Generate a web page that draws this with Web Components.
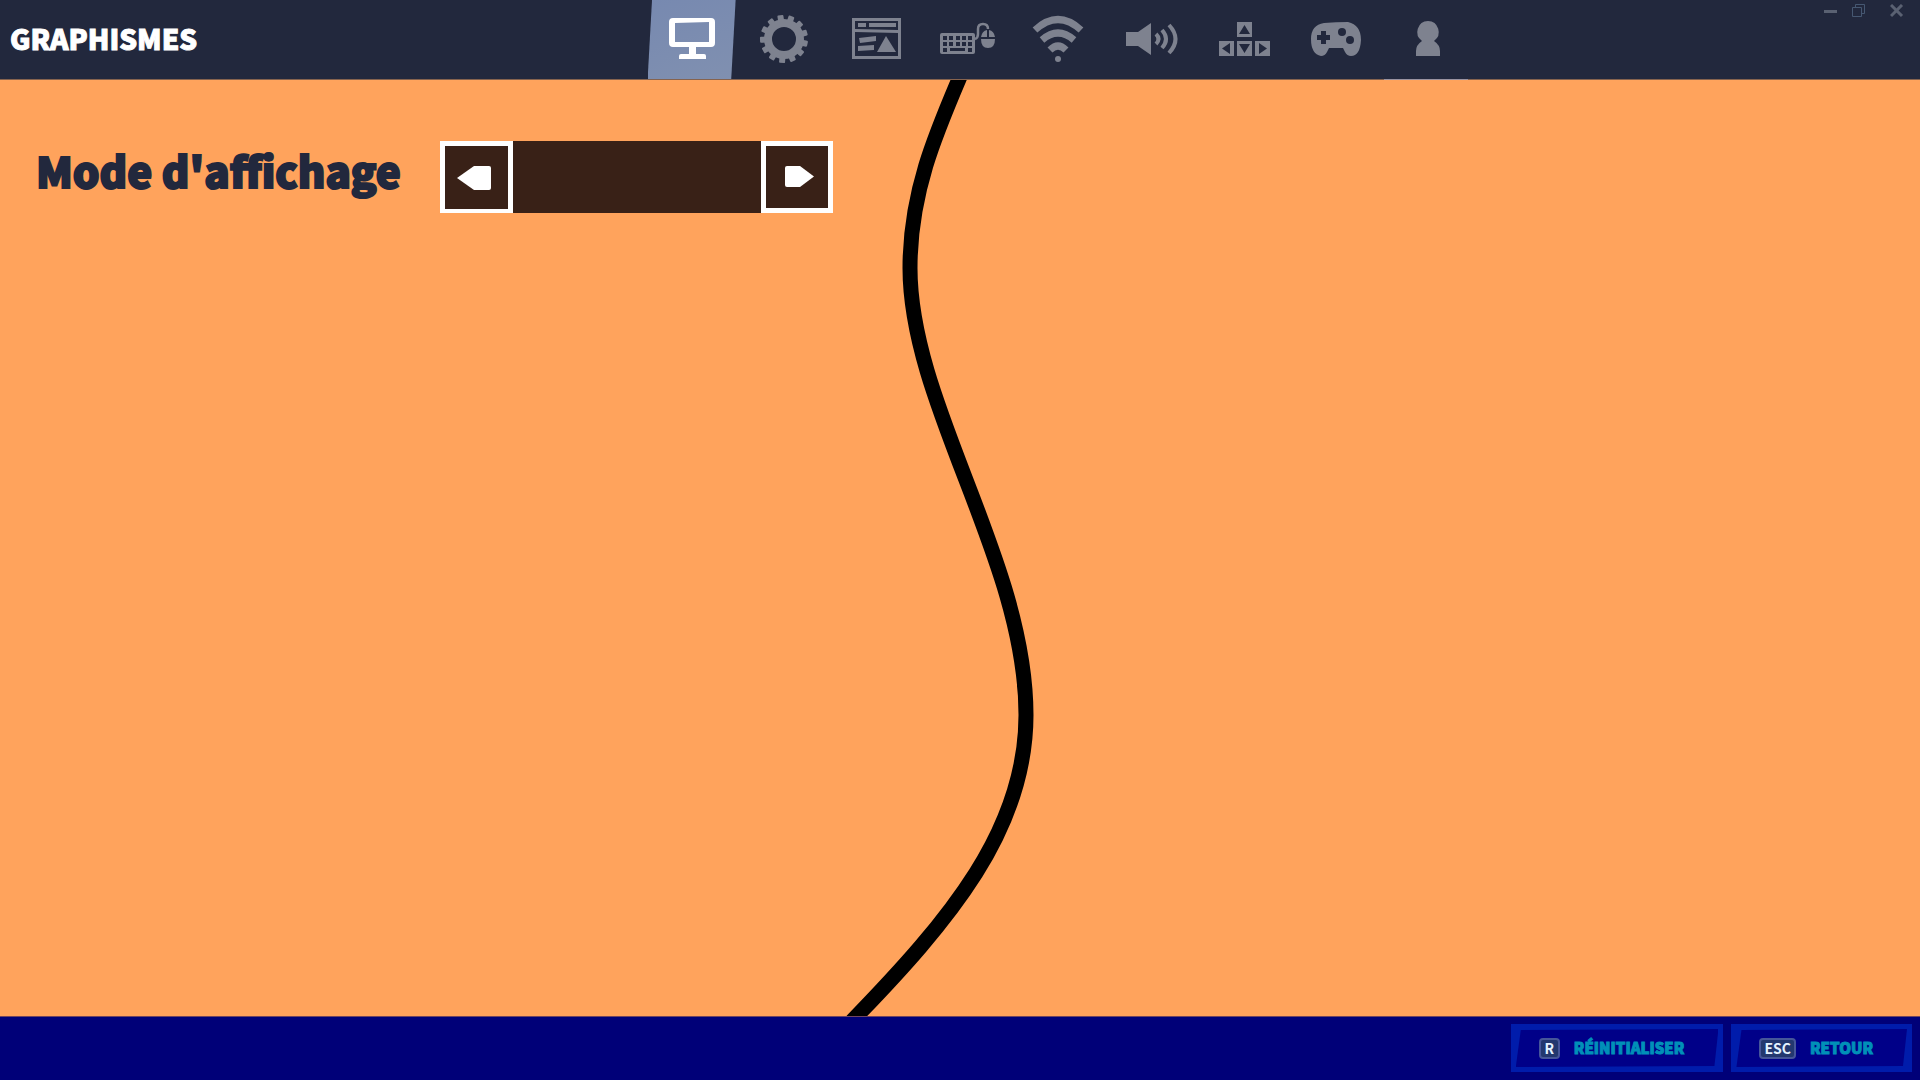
<!DOCTYPE html>
<html lang="fr">
<head>
<meta charset="utf-8">
<title>Graphismes</title>
<style>
html,body{margin:0;height:100%}
body{font-family:"Noto Sans CJK SC","Open Sans",sans-serif;background:#ffa35c}
</style>
</head>
<body>
<settings-screen></settings-screen>
<script>
const define = (name, html, setup) => customElements.define(name, class extends HTMLElement {
  connectedCallback() {
    if (this.shadowRoot) return;
    this.attachShadow({mode: 'open'}).innerHTML = html;
    if (setup) setup(this, this.shadowRoot);
  }
});

const icons = {
  display: '<path fill="#fff" fill-rule="evenodd" d="M4 0H42Q46 0 46 4V25Q46 29 42 29H27V36H35Q37 36 37 38V41H10V38Q10 36 12 36H20V29H4Q0 29 0 25V4Q0 0 4 0ZM6 5V24H40V4Z"/>',
  gear: '',
  hud: '<path fill="currentColor" fill-rule="evenodd" d="M0 0H49V41H0ZM3 3V11L46 12V3ZM3 14V38H46V15Z"/><path fill="currentColor" d="M6 5H14V9H6ZM17 5H44V9H17ZM7 20L24 18V23L8 25ZM6 28L22 27V32L6 33ZM34 18L44 34H25Z"/>',
  keyboard: '<rect y="10" width="35" height="21" rx="2" fill="currentColor"/><g fill="#22283d"><path d="M3 13h4v4H3zM9 13h4v4H9zM16 13h4v4h-4zM22 13h4v4h-4zM28 13h4v4h-4zM3 19h4v4H3zM9 19h4v4H9zM16 19h4v4h-4zM22 19h4v4h-4zM28 19h4v4h-4zM3 25h4v4H3zM10 25h15v3H10zM28 25h4v4h-4z"/></g><path d="M35 16Q38 15 38 11V6Q38 1 43 1Q48 1 48 6" fill="none" stroke="currentColor" stroke-width="2.5"/><path fill="currentColor" d="M47 7V14H41Q42 8 47 7ZM49 7Q54 8 55 14H49ZM41 16H55Q55 25 48 25Q41 25 41 16Z"/>',
  wifi: '<g fill="none" stroke="currentColor" stroke-width="7"><path d="M2 14Q25 -7 48 14"/><path d="M9 24Q25 10 41 24"/><path d="M17 34Q25 26 33 34"/></g><circle cx="25" cy="43" r="3" fill="currentColor"/>',
  sound: '<path fill="currentColor" d="M0 9H12L25 0V32L12 23H0Z"/><g fill="none" stroke="currentColor" stroke-width="4"><path d="M30 11Q35 16 30 21"/><path d="M36 7Q44 16 36 25"/><path d="M43 2Q56 16 43 30"/></g>',
  keys: '<path fill="currentColor" fill-rule="evenodd" d="M18 0H33V15H18ZM25.500 3L20 12H31ZM0 19H15V34H0ZM3 26.500L11 32V21ZM18 19H33V34H18ZM20 22L25.500 31L31 22ZM36 19H51V34H36ZM40 21V32L48 26.500Z"/>',
  pad: '<path fill="currentColor" d="M13 1Q25 0 37 0Q50 3 50 18Q49 34 40 34Q36 34 34 30L32 26H18L16 30Q14 34 10 34Q0 32 0 17Q0 3 13 1Z"/><g fill="#22283d"><path d="M10 9h5v4h4v5h-4v4h-5v-4H6v-5h4z"/><circle cx="31" cy="10" r="4"/><circle cx="39" cy="18" r="4"/></g>',
  person: '<path fill="currentColor" d="M12 0A11 11 0 0 1 18 20Q24 24 24 30V35H0V30Q0 24 6 20A11 11 0 0 1 12 0Z"/>'
};
let teeth = '';
for (let i = 0; i < 13; i++) teeth += `<rect x="21" y="0" width="6" height="9" rx="1" transform="rotate(${-9 + i * 360 / 13} 24 24)"/>`;
icons.gear = `<g fill="currentColor">${teeth}<path fill-rule="evenodd" d="M24 4A20 20 0 1 0 24 44A20 20 0 1 0 24 4ZM24 12A12 12 0 1 1 24 36A12 12 0 1 1 24 12Z"/></g>`;

/* One category tab: <nav-tab icon w h label> */
define('nav-tab', `<style>
:host{display:block;width:88px;height:79px}
button{width:100%;height:100%;padding:0;border:0;background:none;color:#7e828f;display:flex;align-items:center;justify-content:center}
:host([active]) button{background:linear-gradient(160deg,#7789b0,#8090b0);clip-path:polygon(5% 0,100% 0,95% 100%,0 100%)}
:host([last]){width:84px;height:80px;padding-right:4px}
:host([last]) button{border-bottom:1px solid #9a93a0;padding-left:4px}
svg{display:block;overflow:visible;margin-top:-2px}
</style><button type="button"></button>`, (el, root) => {
  const b = root.querySelector('button'), w = el.getAttribute('w'), h = el.getAttribute('h');
  b.setAttribute('aria-label', el.getAttribute('label'));
  b.innerHTML = `<svg width="${w}" height="${h}" viewBox="0 0 ${w} ${h}">${icons[el.getAttribute('icon')]}</svg>`;
});

define('window-controls', `<style>
:host{display:flex;gap:14px;color:#5a6172}
button{display:block;width:14px;height:14px;padding:0;border:0;background:none;color:inherit}
button:last-child{margin-left:10px}
svg{display:block}
</style>
<button aria-label="Réduire"><svg width="14" height="14"><path d="M0 6h13v3H0z" fill="currentColor"/></svg></button>
<button aria-label="Agrandir"><svg width="14" height="14"><path d="M.5 3.500h9v9h-9zM3.500 3V.5h9v9H10" fill="none" stroke="#465872"/></svg></button>
<button aria-label="Fermer"><svg width="14" height="14"><path d="M1 1L12 12M12 1L1 12" stroke="currentColor" stroke-width="3"/></svg></button>`);

define('top-bar', `<style>
:host{display:grid;grid-template-columns:13fr auto 9fr;height:79px;background:#22283d;border-bottom:1px solid #86634e;box-sizing:content-box}
h1{margin:0;padding:0 0 5px 10px;align-self:center;font:900 28px/40px "Noto Sans CJK SC",sans-serif;color:#fff;-webkit-text-stroke:1px #fff}
nav{display:flex;gap:4px}
window-controls{justify-self:end;padding:4px 16px 0 0}
</style>
<h1><slot></slot></h1>
<nav>
<nav-tab active icon="display" w="46" h="41" label="Affichage"></nav-tab>
<nav-tab icon="gear" w="48" h="48" label="Jeu"></nav-tab>
<nav-tab icon="hud" w="48" h="41" label="Interface"></nav-tab>
<nav-tab icon="keyboard" w="56" h="31" label="Clavier et souris"></nav-tab>
<nav-tab icon="wifi" w="54" h="46" label="Réseau"></nav-tab>
<nav-tab icon="sound" w="52" h="32" label="Audio"></nav-tab>
<nav-tab icon="keys" w="50" h="34" label="Touches"></nav-tab>
<nav-tab icon="pad" w="50" h="34" label="Manette"></nav-tab>
<nav-tab last icon="person" w="24" h="35" label="Compte"></nav-tab>
</nav>
<window-controls></window-controls>`);

define('option-stepper', `<style>
:host{display:flex;align-items:flex-start;gap:39px}
span{font:900 42px/58px "Noto Sans CJK SC",sans-serif;color:#22283d;-webkit-text-stroke:2px #22283d}
div{display:flex;width:393px;height:72px;background:#392117}
output{flex:1}
button{box-sizing:border-box;width:73px;height:72px;padding:1px 5px 0 0;border:5px solid #fff;border-bottom-width:4px;background:#392117;display:flex;align-items:center;justify-content:center}
button:last-child{width:72px;padding:0 0 2px 5px;border-bottom-width:5px}
svg{display:block}
</style>
<span id="name"><slot></slot></span>
<div role="group" aria-labelledby="name">
<button type="button" aria-label="Précédent"><svg width="34" height="24"><path fill="#fff" d="M0 12L17 0H32Q34 0 34 2V22Q34 24 32 24H17Z"/></svg></button>
<output></output>
<button type="button" aria-label="Suivant"><svg width="29" height="21"><path fill="#fff" d="M29 10.500L15 21H2Q0 21 0 19V2Q0 0 2 0H15Z"/></svg></button>
</div>`);

define('wave-divider', `<style>
:host,svg{display:block;width:100%;height:100%}
</style><svg viewBox="0 80 1920 936" preserveAspectRatio="none" aria-hidden="true"><path d="M962 72C935 135 910 193 910 268C910 406 1026 560 1026 715C1026 830 950 920 852 1021" fill="none" stroke="#000" stroke-width="15"/></svg>`);

define('key-button', `<style>
:host{display:block}
button{display:flex;align-items:center;gap:14px;height:48px;padding:0 39px 0 28px;border:0;position:relative;background:#001cab;isolation:isolate;font:900 15px/24px "Noto Sans CJK SC",sans-serif;color:#0090b8;-webkit-text-stroke:1px #0090b8}
button::before{content:"";position:absolute;z-index:-1;inset:5px;background:#000088;clip-path:polygon(5px 1px,100% 0,calc(100% - 4px) calc(100% - 1px),0 100%)}
kbd{box-sizing:border-box;min-width:21px;height:21px;padding:0 3px;border:2px solid #465699;border-radius:4px;background:#23386f;color:#e4f2ff;font:700 14px/17px "Noto Sans CJK SC",sans-serif;text-align:center;-webkit-text-stroke:0}
</style><button type="button"><kbd></kbd><slot></slot></button>`, (el, root) => {
  root.querySelector('kbd').textContent = el.getAttribute('key');
});

define('bottom-bar', `<style>
:host{display:flex;justify-content:flex-end;align-items:flex-start;gap:8px;box-sizing:border-box;height:64px;padding:7px 8px 0;background:#000078;border-top:1px solid #704560}
</style><slot></slot>`);

define('settings-screen', `<style>
:host{display:grid;grid-template-rows:auto 1fr auto;min-height:100vh}
main{display:grid;background:#ffa35c}
main>*{grid-area:1/1}
form{padding:61px 36px;display:flex;align-items:flex-start}
</style>
<top-bar>GRAPHISMES</top-bar>
<main><wave-divider></wave-divider><form><option-stepper>Mode d'affichage</option-stepper></form></main>
<bottom-bar><key-button key="R">RÉINITIALISER</key-button><key-button key="ESC">RETOUR</key-button></bottom-bar>`);
</script>
</body>
</html>
